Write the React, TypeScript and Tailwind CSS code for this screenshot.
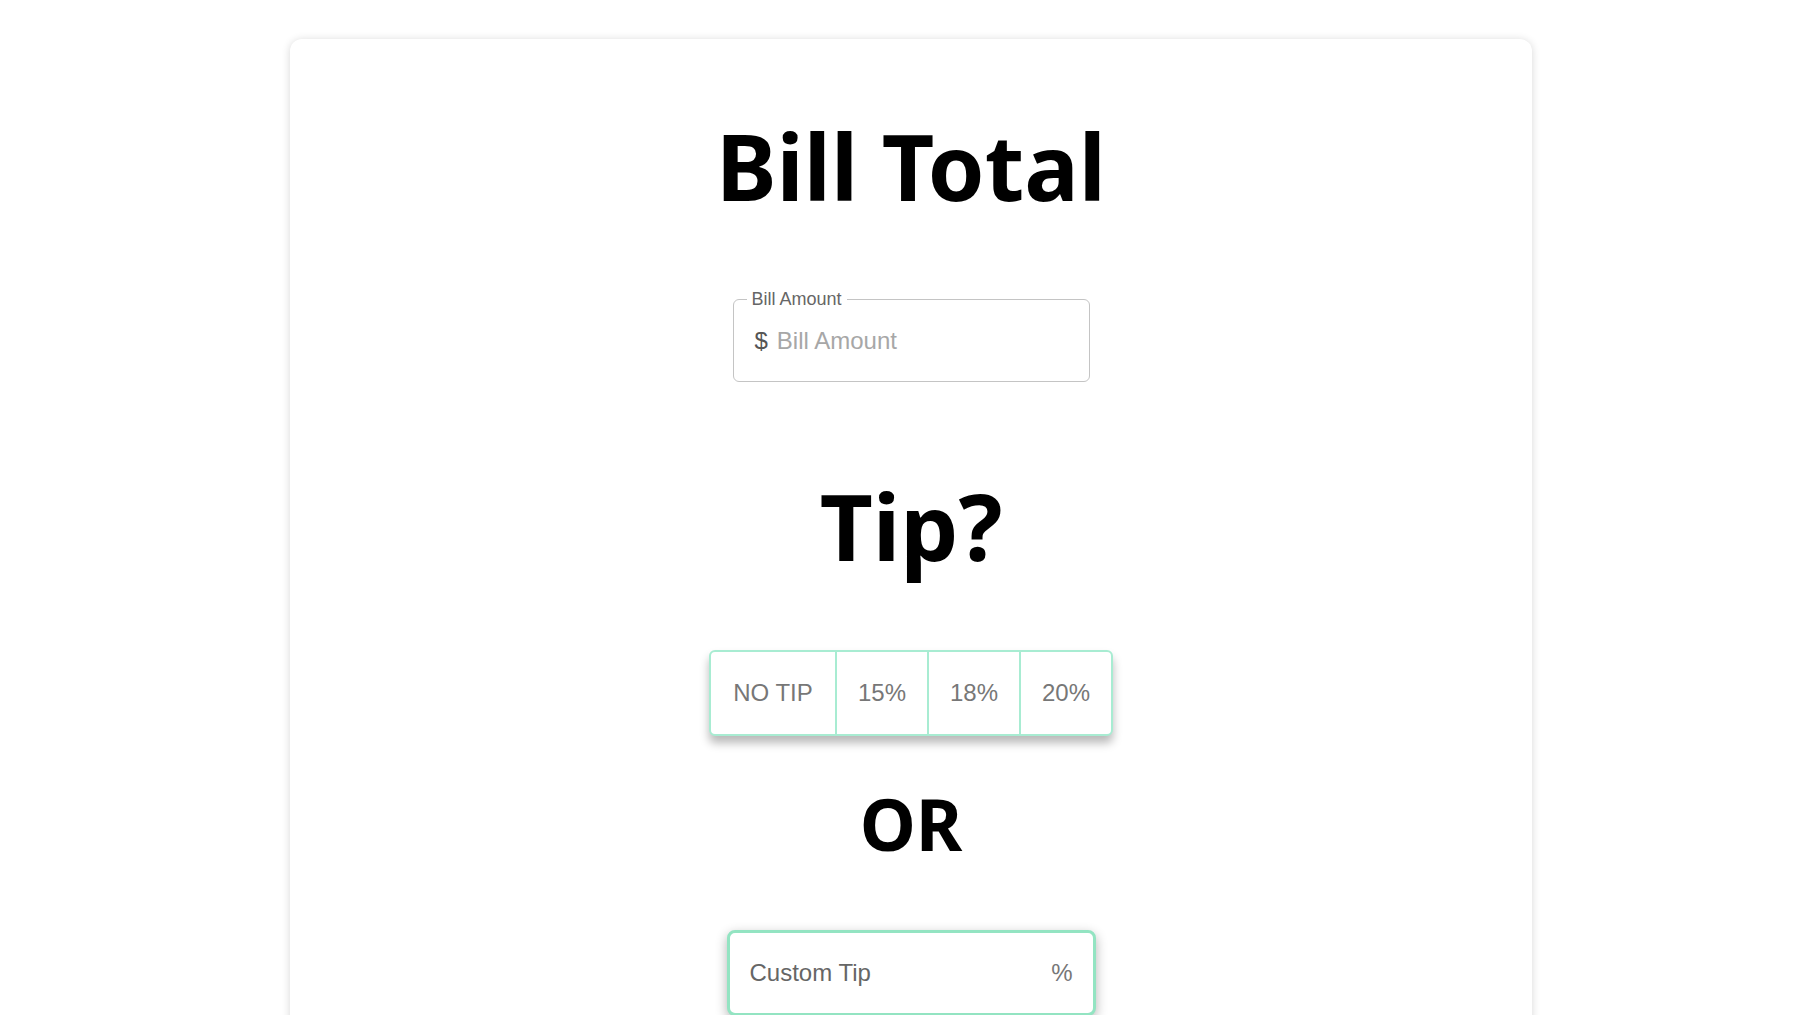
import React from "react";

export default function App() {
  const heading = "font-['Noto_Sans',sans-serif] font-bold text-black leading-none";
  const body = "font-['Liberation_Sans',Arial,sans-serif]";
  return (
    <div className="min-h-[1015px] w-full bg-white overflow-hidden">
      <div className="ml-[290px] mt-[39px] w-[1242px] min-h-[1100px] rounded-[12px] bg-white shadow-[0_1px_8px_rgba(0,0,0,0.16)] flex flex-col items-center pt-[82px]">
        <h1 className={`${heading} text-[91px]`}>Bill Total</h1>

        <div className="relative mt-[87px] w-[357px] h-[83px] rounded-[6px] border border-[#c4c4c4] flex items-center px-[21px]">
          <span className={`${body} absolute -top-[13px] left-[13px] bg-white px-[5px] text-[18px] leading-[24px] text-[#666]`}>
            Bill Amount
          </span>
          <span className={`${body} text-[24px] text-[#555] mr-[9px]`}>$</span>
          <span className={`${body} text-[24px] text-[#a7a7a7]`}>Bill Amount</span>
        </div>

        <h2 className={`${heading} text-[92px] mt-[98px]`}>Tip?</h2>

        <div className="mt-[78px] flex h-[86px] rounded-[6px] border-2 border-[#a8ecd2] shadow-[0_7px_10px_rgba(0,0,0,0.28)] bg-white">
          {[
            { t: "NO TIP", w: "w-[124px]" },
            { t: "15%", w: "w-[92px]" },
            { t: "18%", w: "w-[92px]" },
            { t: "20%", w: "w-[92px]" },
          ].map((b, i) => (
            <div
              key={b.t}
              className={`${b.w} flex items-center justify-center ${body} text-[24px] text-[#777] ${i > 0 ? "border-l-2 border-[#a8ecd2]" : ""}`}
            >
              {b.t}
            </div>
          ))}
        </div>

        <h2 className={`${heading} text-[71px] mt-[52px]`}>OR</h2>

        <div className="mt-[71px] w-[369px] h-[86px] rounded-[8px] border-[3px] border-[#93e4c2] shadow-[0_4px_12px_rgba(0,0,0,0.3)] bg-white flex items-center justify-between pl-[20px] pr-[20px]">
          <span className={`${body} text-[24px] text-[#666]`}>Custom Tip</span>
          <span className={`${body} text-[24px] text-[#777]`}>%</span>
        </div>
      </div>
    </div>
  );
}
